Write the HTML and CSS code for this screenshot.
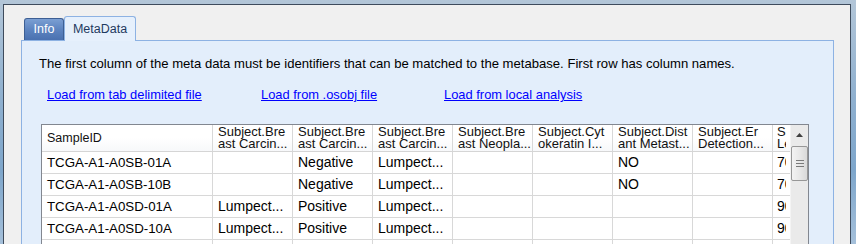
FILE: index.html
```html
<!DOCTYPE html>
<html lang="en">
    <head>
        <meta charset="utf-8">
        <title>Meta Data</title>
        <link rel="stylesheet" href="styles.css">
    </head>
    <body>
        <div class="window">
            <div class="client">

                <!-- tab strip -->
                <div class="tabs">
                    <div class="tab">Info</div>
                    <div class="tab selected">MetaData</div>
                </div>

                <div class="panel">
                    <p class="intro">The first column of the meta data must be identifiers that can be matched to the metabase. First row has column names.</p>

                    <div class="links">
                        <span class="slot1"><a href="#">Load from tab delimited file</a></span>
                        <span class="slot2"><a href="#">Load from .osobj file</a></span>
                        <span><a href="#">Load from local analysis</a></span>
                    </div>

                    <!-- meta data grid -->
                    <div class="grid">
                        <div class="cells">
                            <div class="row head">
                                <div class="cell first">SampleID</div>
                                <div class="cell">Subject.Bre<br>ast Carcin...</div>
                                <div class="cell">Subject.Bre<br>ast Carcin...</div>
                                <div class="cell">Subject.Bre<br>ast Carcin...</div>
                                <div class="cell">Subject.Bre<br>ast Neopla...</div>
                                <div class="cell">Subject.Cyt<br>okeratin I...</div>
                                <div class="cell">Subject.Dist<br>ant Metast...</div>
                                <div class="cell">Subject.Er<br>Detection...</div>
                                <div class="cell last">Subject.<br>Level...</div>
                            </div>
                            <div class="row">
                                <div class="cell first">TCGA-A1-A0SB-01A</div>
                                <div class="cell"></div>
                                <div class="cell">Negative</div>
                                <div class="cell">Lumpect...</div>
                                <div class="cell"></div>
                                <div class="cell"></div>
                                <div class="cell">NO</div>
                                <div class="cell"></div>
                                <div class="cell last">70</div>
                            </div>
                            <div class="row">
                                <div class="cell first">TCGA-A1-A0SB-10B</div>
                                <div class="cell"></div>
                                <div class="cell">Negative</div>
                                <div class="cell">Lumpect...</div>
                                <div class="cell"></div>
                                <div class="cell"></div>
                                <div class="cell">NO</div>
                                <div class="cell"></div>
                                <div class="cell last">70</div>
                            </div>
                            <div class="row">
                                <div class="cell first">TCGA-A1-A0SD-01A</div>
                                <div class="cell">Lumpect...</div>
                                <div class="cell">Positive</div>
                                <div class="cell">Lumpect...</div>
                                <div class="cell"></div>
                                <div class="cell"></div>
                                <div class="cell"></div>
                                <div class="cell"></div>
                                <div class="cell last">90</div>
                            </div>
                            <div class="row">
                                <div class="cell first">TCGA-A1-A0SD-10A</div>
                                <div class="cell">Lumpect...</div>
                                <div class="cell">Positive</div>
                                <div class="cell">Lumpect...</div>
                                <div class="cell"></div>
                                <div class="cell"></div>
                                <div class="cell"></div>
                                <div class="cell"></div>
                                <div class="cell last">90</div>
                            </div>
                            <div class="row">
                                <div class="cell first"></div>
                                <div class="cell"></div>
                                <div class="cell"></div>
                                <div class="cell"></div>
                                <div class="cell"></div>
                                <div class="cell"></div>
                                <div class="cell"></div>
                                <div class="cell"></div>
                                <div class="cell last"></div>
                            </div>
                        </div>

                        <!-- vertical scroll bar -->
                        <div class="vscroll">
                            <div class="arrow">
                                <svg width="7" height="4" viewBox="0 0 7 4"><path d="M0 4 L3.5 0 L7 4 Z" fill="#404040"/></svg>
                            </div>
                            <div class="thumb">
                                <svg width="8" height="7" viewBox="0 0 8 7"><path d="M0 0.5 H8 M0 3.5 H8 M0 6.5 H8" stroke="#7a7a7a" stroke-width="1"/></svg>
                            </div>
                        </div>
                    </div>
                </div>

            </div>
        </div>
    </body>
</html>
```

FILE: styles.css
```css
html, body {
    margin: 0;
    height: 100%;
    overflow: hidden;
}
body {
    background: linear-gradient(180deg, #b3c6d8 0%, #8fb0cf 40%, #7ea6cb 70%, #a5c0da 100%);
    font-family: "Liberation Sans", Arial, sans-serif;
}

.window {
    margin: 4px 5px 0 3px;
    height: 100%;
    border: 1px solid #3e4b5c;
    border-bottom: none;
    background-color: #f0f0f0;
}
.client {
    padding: 11px 16px 0 17px;
}

/* tabs */
.tabs {
    display: flex;
    align-items: flex-end;
    padding-left: 3px;
    height: 24px;
}
.tab {
    box-sizing: border-box;
    width: 40px;
    height: 22px;
    border: 1px solid #3d5f94;
    border-bottom: none;
    border-radius: 3px 3px 0 0;
    background: linear-gradient(180deg, #7b9fd3 0%, #5d84c0 50%, #4a71b0 100%);
    color: white;
    font-size: 12.5px;
    text-align: center;
    line-height: 21px;
}
.tab.selected {
    width: 72px;
    height: 25px;
    margin-bottom: -1px;
    border-color: #8db2e3;
    background: #e6f0fc;
    color: #1e3a60;
    line-height: 24px;
    position: relative;
}

/* panel */
.panel {
    border: 1px solid #8db2e3;
    background-color: #e3eefb;
    padding: 15px 0 0 19px;
    height: 300px;
}
.intro {
    margin: 0 0 0 -2px;
    font-size: 13.1px;
    line-height: 15px;
    color: black;
}
.links {
    display: flex;
    margin: 16px 0 0 6px;
    font-size: 12.9px;
    line-height: 15px;
}
.links a {
    color: #0000ff;
}
.slot1 {
    width: 214px;
}
.slot2 {
    width: 183px;
}

/* grid */
.grid {
    display: flex;
    width: 766px;
    margin-top: 22px;
    border: 1px solid #828790;
    background-color: white;
}
.cells {
    width: 748px;
    overflow: hidden;
}
.row {
    display: flex;
    height: 21px;
    border-bottom: 1px solid #d8d8d8;
}
.row.head {
    height: 26px;
    border-bottom-color: #d5d5d5;
    background: linear-gradient(180deg, #ffffff 0%, #ffffff 50%, #f7f8fa 100%);
}
.cell {
    box-sizing: border-box;
    flex: 0 0 80px;
    height: 100%;
    border-right: 1px solid #d8d8d8;
    padding: 0 0 0 5px;
    font-size: 14px;
    line-height: 21px;
    color: black;
    white-space: nowrap;
    overflow: hidden;
}
.cell.first {
    flex-basis: 171px;
    font-size: 13.3px;
}
.cell.last {
    flex-basis: 13px;
    padding-left: 4px;
    border-right: none;
}
.head .cell {
    font-size: 13px;
    line-height: 12px;
    padding-top: 1px;
    color: #111;
}
.head .cell.first {
    font-size: 12.5px;
    line-height: 26px;
    padding-top: 0;
}

/* scroll bar */
.vscroll {
    flex: 0 0 17px;
    background-color: #eaeaea;
    border-left: 1px solid #f4f4f4;
}
.arrow {
    height: 20px;
    display: flex;
    align-items: center;
    justify-content: center;
}
.thumb {
    box-sizing: border-box;
    height: 35px;
    margin: 1px 0 0 0;
    border: 1px solid #979797;
    border-radius: 2px;
    background: linear-gradient(90deg, #f3f3f3 0%, #e8e8e8 50%, #d9d9d9 100%);
    display: flex;
    align-items: center;
    justify-content: center;
}
```
